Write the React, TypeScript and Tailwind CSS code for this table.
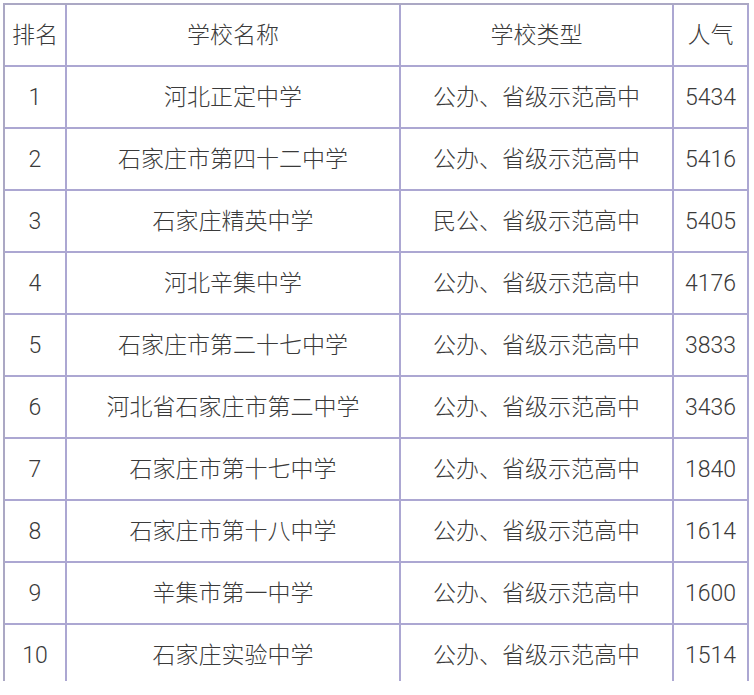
const rows = [
  ["1", "河北正定中学", "公办、省级示范高中", "5434"],
  ["2", "石家庄市第四十二中学", "公办、省级示范高中", "5416"],
  ["3", "石家庄精英中学", "民公、省级示范高中", "5405"],
  ["4", "河北辛集中学", "公办、省级示范高中", "4176"],
  ["5", "石家庄市第二十七中学", "公办、省级示范高中", "3833"],
  ["6", "河北省石家庄市第二中学", "公办、省级示范高中", "3436"],
  ["7", "石家庄市第十七中学", "公办、省级示范高中", "1840"],
  ["8", "石家庄市第十八中学", "公办、省级示范高中", "1614"],
  ["9", "辛集市第一中学", "公办、省级示范高中", "1600"],
  ["10", "石家庄实验中学", "公办、省级示范高中", "1514"],
];

const header = ["排名", "学校名称", "学校类型", "人气"];

const Cell = ({ children }: { children: React.ReactNode }) => (
  <div className="h-[62px] pt-[3px] flex items-center justify-center border-r-2 border-b-2 border-[#aca7d2] whitespace-nowrap">
    {children}
  </div>
);

const App = () => {
  return (
    <div className="w-[754px] h-[695px] bg-white pt-[3px] pl-[3px]">
      <div className="h-[678px] overflow-hidden">
        <div
          className="grid grid-cols-[62px_334px_273px_75px] border-l-2 border-t-2 border-[#aba8c4] w-max text-[23px] font-light text-[#3a3a3a]"
          style={{ fontFamily: 'Roboto, "Noto Sans CJK SC", sans-serif' }}
        >
          {header.map((h) => (
            <Cell key={h}>{h}</Cell>
          ))}
          {rows.map((r) =>
            r.map((c, i) => <Cell key={r[0] + "-" + i}>{c}</Cell>)
          )}
        </div>
      </div>
    </div>
  );
};

export default App;
